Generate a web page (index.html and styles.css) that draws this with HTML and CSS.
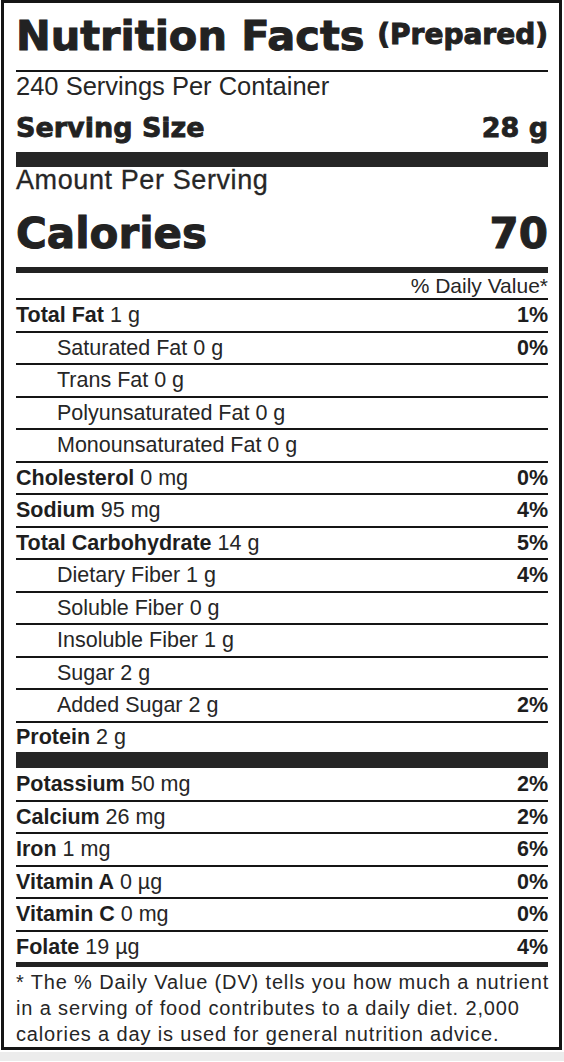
FILE: index.html
```
<!DOCTYPE html>
<html lang="en">

<head>
    <meta charset="UTF-8">
    <meta name="viewport" content="width=device-width, initial-scale=1.0">
    <title>Nutrition Facts</title>
    <link rel="stylesheet" href="styles.css">
</head>

<body>
    <div class="label">
        <div class="title">
            <h1>Nutrition Facts</h1>
            <span class="prep">(Prepared)</span>
        </div>

        <div class="servings">240 Servings Per Container</div>

        <div class="serving-size">
            <span>Serving Size</span>
            <span>28 g</span>
        </div>

        <div class="amount">Amount Per Serving</div>

        <div class="calories">
            <span>Calories</span>
            <span>70</span>
        </div>

        <div class="dv">% Daily Value*</div>

        <!-- Fats -->
        <div class="row"><span><b>Total Fat</b> 1 g</span><b>1%</b></div>
        <div class="row sub"><span>Saturated Fat 0 g</span><b>0%</b></div>
        <div class="row sub"><span>Trans Fat 0 g</span></div>
        <div class="row sub"><span>Polyunsaturated Fat 0 g</span></div>
        <div class="row sub"><span>Monounsaturated Fat 0 g</span></div>
        <div class="row"><span><b>Cholesterol</b> 0 mg</span><b>0%</b></div>
        <div class="row"><span><b>Sodium</b> 95 mg</span><b>4%</b></div>

        <!-- Carbs -->
        <div class="row"><span><b>Total Carbohydrate</b> 14 g</span><b>5%</b></div>
        <div class="row sub"><span>Dietary Fiber 1 g</span><b>4%</b></div>
        <div class="row sub"><span>Soluble Fiber 0 g</span></div>
        <div class="row sub"><span>Insoluble Fiber 1 g</span></div>
        <div class="row sub"><span>Sugar 2 g</span></div>
        <div class="row sub"><span>Added Sugar 2 g</span><b>2%</b></div>
        <div class="row protein"><span><b>Protein</b> 2 g</span></div>

        <!-- Vitamins and minerals -->
        <div class="row first"><span><b>Potassium</b> 50 mg</span><b>2%</b></div>
        <div class="row"><span><b>Calcium</b> 26 mg</span><b>2%</b></div>
        <div class="row"><span><b>Iron</b> 1 mg</span><b>6%</b></div>
        <div class="row"><span><b>Vitamin A</b> 0 µg</span><b>0%</b></div>
        <div class="row"><span><b>Vitamin C</b> 0 mg</span><b>0%</b></div>
        <div class="row last"><span><b>Folate</b> 19 µg</span><b>4%</b></div>

        <p class="note">* The % Daily Value (DV) tells you how much a nutrient<br>in a serving of food contributes to a daily diet. 2,000<br>calories a day is used for general nutrition advice.</p>
    </div>
    <div class="shade"></div>
</body>

</html>
```

FILE: styles.css
```
/* General Body Styling */
body {
    margin: 0;
    padding: 0;
    background-color: #ffffff;
    font-family: 'Liberation Sans', Arial, sans-serif;
    color: #262626;
}

.label {
    margin: 0 2px 0 1px;
    border: 3px solid #151515;
    padding: 0 11px 0 12px;
    background-color: #ffffff;
}

/* Heavy headings */
.title,
.serving-size,
.calories {
    display: flex;
    justify-content: space-between;
    font-family: 'DejaVu Sans', sans-serif;
    font-weight: bold;
    color: #222;
    -webkit-text-stroke: 1px #222;
}

.title {
    align-items: flex-end;
    padding: 12px 0 14px;
    border-bottom: 2px solid #151515;
}

.title h1 {
    margin: 0;
    font-size: 41.5px;
    line-height: 41px;
}

.prep {
    font-size: 28px;
    line-height: 28px;
    margin-bottom: 7px;
}

.servings {
    padding-top: 2px;
    font-size: 25.5px;
    line-height: 25px;
}

.serving-size {
    padding: 16px 0 11px;
    font-size: 27px;
    line-height: 26px;
    -webkit-text-stroke: 0.8px #222;
    border-bottom: 15px solid #262626;
}

.amount {
    padding-top: 2px;
    font-size: 27px;
    line-height: 23px;
    letter-spacing: 0.6px;
    -webkit-text-stroke: 0.3px #262626;
}

.calories {
    padding: 21px 0 12px;
    font-size: 42px;
    line-height: 42px;
    border-bottom: 6px solid #222;
}

.dv {
    height: 25px;
    line-height: 25px;
    text-align: right;
    font-size: 21px;
    border-bottom: 2px solid #151515;
}

/* Nutrient rows */
.row {
    display: flex;
    justify-content: space-between;
    align-items: center;
    height: 29.5px;
    padding-top: 1px;
    font-size: 21.5px;
    border-bottom: 2px solid #151515;
}

.row b {
    color: #1e1e1e;
}

.sub {
    padding-left: 41px;
}

.protein {
    height: 28px;
    border-bottom: 16px solid #262626;
}

.first {
    height: 31px;
}

.last {
    height: 29px;
    border-bottom: 5px solid #222;
}

.note {
    margin: 0;
    padding-top: 2px;
    font-size: 20px;
    line-height: 26px;
    letter-spacing: 0.85px;
    white-space: nowrap;
}

.shade {
    margin-top: 2px;
    height: 9px;
    background-color: #ececec;
}
```
